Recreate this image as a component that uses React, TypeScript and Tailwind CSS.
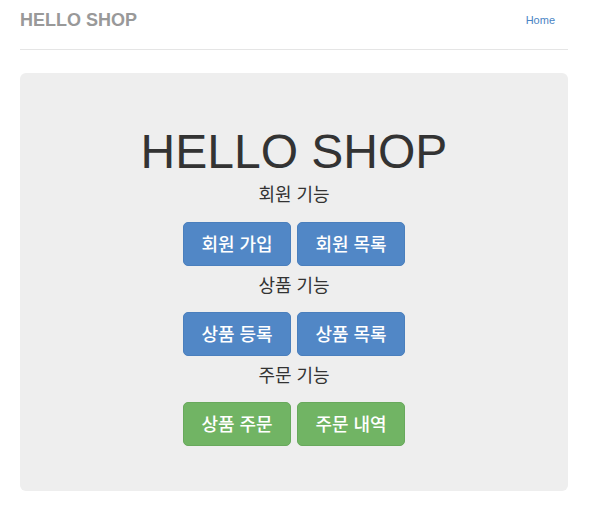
import React from "react";

const Btn = ({ label, color }: { label: string; color: "blue" | "green" }) => (
  <a
    href="#"
    className={
      "flex h-[44px] w-[108px] items-center justify-center rounded-[5px] border pt-[2px] text-[18px] font-medium text-white " +
      (color === "blue"
        ? "border-[#4a7fbd] bg-[#5187c6]"
        : "border-[#68a95c] bg-[#71b464]")
    }
  >
    {label}
  </a>
);

export default function App() {
  const kr = { fontFamily: '"Liberation Sans", "Noto Sans CJK KR", sans-serif' };
  return (
    <div className="min-h-[515px] bg-white pl-5" style={kr}>
      <div className="w-[548px]">
        <div className="flex items-start justify-between border-b border-[#e5e5e5] pb-[19px] pt-[10px]">
          <h3 className="text-[18px] font-bold leading-[20px] text-[#999999]">HELLO SHOP</h3>
          <a href="#" className="mr-[13px] mt-[3px] text-[11px] leading-[14px] text-[#4a84c4]">
            Home
          </a>
        </div>
        <div className="mt-[23px] flex flex-col items-center rounded-[6px] bg-[#eeeeee] pb-[45px] pt-[55px]">
          <h1 className="text-[48px] leading-[48px] text-[#333333]">HELLO SHOP</h1>
          <p className="mt-[8px] text-[18px] leading-[22px] text-[#333333]">회원 기능</p>
          <div className="mt-[16px] flex gap-[6px]">
            <Btn label="회원 가입" color="blue" />
            <Btn label="회원 목록" color="blue" />
          </div>
          <p className="mt-[9px] text-[18px] leading-[22px] text-[#333333]">상품 기능</p>
          <div className="mt-[15px] flex gap-[6px]">
            <Btn label="상품 등록" color="blue" />
            <Btn label="상품 목록" color="blue" />
          </div>
          <p className="mt-[9px] text-[18px] leading-[22px] text-[#333333]">주문 기능</p>
          <div className="mt-[15px] flex gap-[6px]">
            <Btn label="상품 주문" color="green" />
            <Btn label="주문 내역" color="green" />
          </div>
        </div>
      </div>
    </div>
  );
}
